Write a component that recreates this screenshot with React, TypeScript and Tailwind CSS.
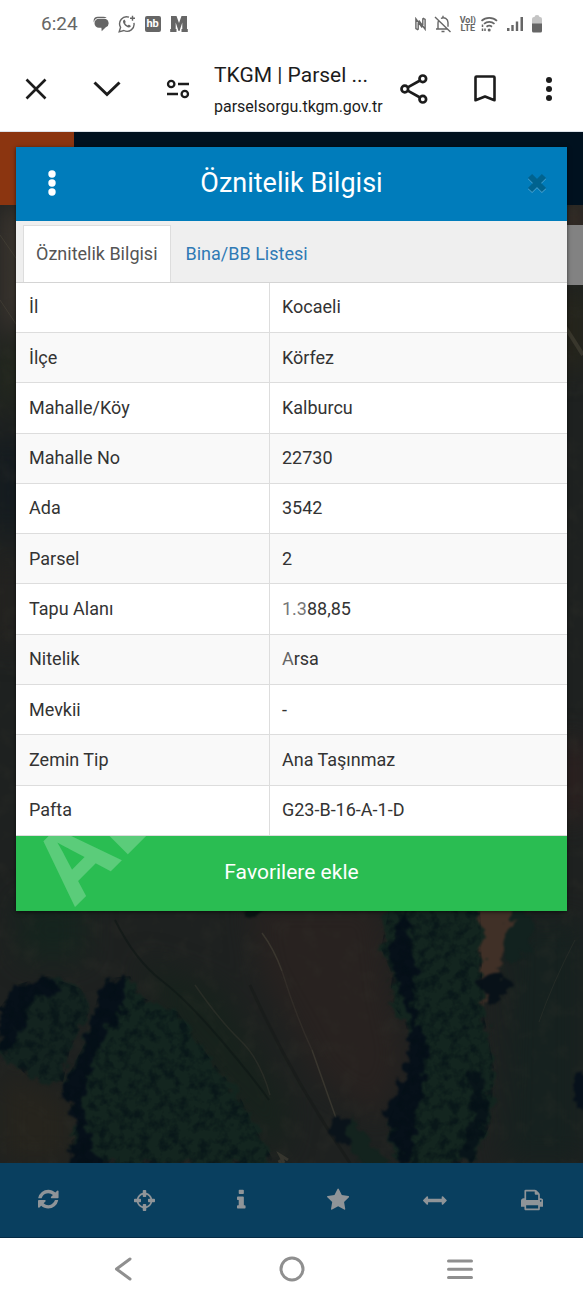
import { type ReactNode, useState } from 'react'

type Row = { label: string; value: ReactNode }

const ROWS: Row[] = [
  { label: 'İl', value: 'Kocaeli' },
  { label: 'İlçe', value: 'Körfez' },
  { label: 'Mahalle/Köy', value: 'Kalburcu' },
  { label: 'Mahalle No', value: '22730' },
  { label: 'Ada', value: '3542' },
  { label: 'Parsel', value: '2' },
  {
    label: 'Tapu Alanı',
    value: (
      <>
        <span className="text-[#777]">1.3</span>88,85
      </>
    ),
  },
  {
    label: 'Nitelik',
    value: (
      <>
        <span className="text-[#666]">A</span>rsa
      </>
    ),
  },
  { label: 'Mevkii', value: '-' },
  { label: 'Zemin Tip', value: 'Ana Taşınmaz' },
  { label: 'Pafta', value: 'G23-B-16-A-1-D' },
]

const TABS = ['Öznitelik Bilgisi', 'Bina/BB Listesi']

const TOOLS = [
  {
    label: 'Yenile',
    width: 1536,
    height: 1792,
    className: 'h-6',
    d: 'M1511 928q0 5-1 7-64 268-268 434.5t-478 166.5q-146 0-282.5-55t-243.5-157l-129 129q-19 19-45 19t-45-19-19-45v-448q0-26 19-45t45-19h448q26 0 45 19t19 45-19 45l-137 137q71 66 161 102t187 36q134 0 250-65t186-179q11-17 53-117 8-23 30-23h192q13 0 22.5 9.5t9.5 22.500zM1536 256v448q0 26-19 45t-45 19h-448q-26 0-45-19t-19-45 19-45l138-138q-148-137-349-137-134 0-250 65t-186 179q-11 17-53 117-8 23-30 23h-199q-13 0-22.5-9.5t-9.5-22.5v-7q65-268 270-434.5t480-166.5q146 0 284 55.5t245 156.5l130-129q19-19 45-19t45 19 19 45z',
  },
  {
    label: 'Konum',
    width: 1536,
    height: 1536,
    className: 'h-[21px]',
    d: 'M1197 896h-109q-26 0-45-19t-19-45v-128q0-26 19-45t45-19h109q-32-108-112.5-188.5t-188.5-112.5v109q0 26-19 45t-45 19h-128q-26 0-45-19t-19-45v-109q-108 32-188.5 112.5t-112.5 188.5h109q26 0 45 19t19 45v128q0 26-19 45t-45 19h-109q32 108 112.5 188.5t188.5 112.5v-109q0-26 19-45t45-19h128q26 0 45 19t19 45v109q108-32 188.5-112.5t112.5-188.5zM1536 704v128q0 26-19 45t-45 19h-143q-37 161-154.5 278.5t-278.5 154.5v143q0 26-19 45t-45 19h-128q-26 0-45-19t-19-45v-143q-161-37-278.5-154.5t-154.5-278.5h-143q-26 0-45-19t-19-45v-128q0-26 19-45t45-19h143q37-161 154.5-278.5t278.5-154.5v-143q0-26 19-45t45-19h128q26 0 45 19t19 45v143q161 37 278.5 154.5t154.5 278.5h143q26 0 45 19t19 45z',
  },
  {
    label: 'Bilgi',
    width: 640,
    height: 1792,
    className: 'h-6',
    d: 'M640 1344v128q0 26-19 45t-45 19h-512q-26 0-45-19t-19-45v-128q0-26 19-45t45-19h64v-384h-64q-26 0-45-19t-19-45v-128q0-26 19-45t45-19h384q26 0 45 19t19 45v576h64q26 0 45 19t19 45zM512 192v192q0 26-19 45t-45 19h-256q-26 0-45-19t-19-45v-192q0-26 19-45t45-19h256q26 0 45 19t19 45z',
  },
  {
    label: 'Favoriler',
    width: 1664,
    height: 1792,
    className: 'h-6',
    d: 'M1664 647q0 22-26 48l-363 354 86 500q1 7 1 20 0 21-10.5 35.500t-30.5 14.500q-19 0-40-12l-449-236-449 236q-22 12-40 12-21 0-31.500-14.500t-10.500-35.500q0-6 2-20l86-500-364-354q-25-27-25-48 0-37 56-46l502-73 225-455q19-41 49-41t49 41l225 455 502 73q56 9 56 46z',
  },
  {
    label: 'Ölçüm',
    width: 1792,
    height: 1280,
    className: 'h-[17px]',
    d: 'M1792 640q0 26-19 45l-256 256q-19 19-45 19t-45-19-19-45v-128h-1024v128q0 26-19 45t-45 19-45-19l-256-256q-19-19-19-45t19-45l256-256q19-19 45-19t45 19 19 45v128h1024v-128q0-26 19-45t45-19 45 19l256 256q19 19 19 45z',
  },
  {
    label: 'Yazdır',
    width: 1664,
    height: 1792,
    className: 'h-6',
    d: 'M384 1536h896v-256h-896v256zM384 896h896v-384h-160q-40 0-68-28t-28-68v-160h-640v640zM1536 960q0-26-19-45t-45-19-45 19-19 45 19 45 45 19 45-19 19-45zM1664 960v416q0 13-9.5 22.5t-22.5 9.5h-224v160q0 40-28 68t-68 28h-960q-40 0-68-28t-28-68v-160h-224q-13 0-22.5-9.5t-9.5-22.5v-416q0-79 56.5-135.5t135.5-56.5h64v-544q0-40 28-68t68-28h672q40 0 88 20t76 48l152 152q28 28 48 76t20 88v256h64q79 0 135.5 56.5t56.5 135.500z',
  },
]

export default function App() {
  return (
    <div className="flex min-h-screen flex-col bg-white font-['Roboto',sans-serif] text-[#222]">
      <StatusBar />
      <BrowserBar />
      <main className="grid flex-1 grid-cols-1">
        <Backdrop />
        <div className="z-10 col-start-1 row-start-1 px-4 pt-[15px] pb-24">
          <AttributeDialog />
        </div>
      </main>
      <SystemNav />
    </div>
  )
}

function StatusBar() {
  return (
    <header className="flex h-12 items-center justify-between pr-[41px] pl-[41px] text-[#666]">
      <div className="flex items-center gap-[9px]">
        <span className="mr-1.5 text-[19px]">6:24</span>
        <svg width="16" height="16" viewBox="0 0 16 16" fill="currentColor" aria-hidden>
          <path d="M4.800.800h5.500a4.600 4.600 0 0 1 3.400 1.300H6A5 5 0 0 0 1 6.600 3.600 3.600 0 0 1 .600 4.800a4.200 4.200 0 0 1 4.200-4z" />
          <path d="M6 2.800h5.200a4.400 4.400 0 0 1 1.600 8.500L8.700 15.200l-.300-3.400H6a4.500 4.500 0 0 1 0-9z" />
        </svg>
        <svg width="18" height="18" viewBox="0 0 18 18" fill="none" stroke="currentColor" strokeWidth="1.400" aria-hidden>
          <path d="M11 2.200A7 7 0 0 0 2.600 12.300L1.200 16.800l4.600-1.300A7 7 0 0 0 15.900 7.800" />
          <path d="M14.500.800v5M12 3.300h5" />
          <path
            d="M6.100 4.800c-1.600.800-1.400 2.900.100 4.800 1.800 2.300 4.700 4 6.300 2.200.400-.600.300-1-.200-1.300l-1.200-.700c-.700-.200-.800.800-1.500.700-1-.400-2.200-1.500-2.500-2.400 0-.600.700-.700.500-1.400l-.600-1.400c-.200-.500-.500-.600-.900-.500z"
            fill="currentColor"
            stroke="none"
          />
        </svg>
        <span className="flex size-4 items-center justify-center rounded-xs bg-[#666] text-[11px] leading-4 font-bold text-white">
          hb
        </span>
        <svg width="18" height="16" viewBox="0 0 18 16" fill="currentColor" aria-hidden>
          <path d="M1 0h5.500L9 7l2.500-7H17v13h.800v3H11.500v-3h.800V6.500L9.500 15h-1L5.700 6.500V13h.800v3H.200v-3H1z" />
        </svg>
      </div>
      <div className="flex items-center gap-1">
        <svg width="11" height="14" viewBox="0 0 11 14" fill="none" stroke="currentColor" strokeWidth="1.400" aria-hidden>
          <path d="M3.200 12.800.900 11.600V1.800L7.200 10.500M7.800 1.200l2.300 1.200v9.800L3.800 3.500M3.200 12.800V6M7.800 1.200V8" />
        </svg>
        <svg className="mx-1" width="18" height="18" viewBox="0 0 18 18" fill="none" stroke="currentColor" strokeWidth="1.400" aria-hidden>
          <path d="M1 2l15.500 15M2 14h11.500M4 14V8c0-1 .300-1.900.800-2.600M7 3.500a4.600 4.600 0 0 1 7 4v4.200M9 3V.800M7.500 16.500h3" />
        </svg>
        <span className="flex flex-col items-center text-[9px] leading-[8px] font-bold">
          <span>Vol)</span>
          <span>LTE</span>
        </span>
        <svg width="18" height="16" viewBox="0 0 18 16" fill="none" stroke="currentColor" strokeWidth="1.700" aria-hidden>
          <path d="M1.500 4.800a11.500 11.500 0 0 1 15.500 0M4 7.800a8 8 0 0 1 10.500 0M6.500 10.700a4.600 4.600 0 0 1 5.500 0" />
          <circle cx="9.200" cy="14" r="1.500" fill="currentColor" stroke="none" />
          <path d="M2.500 8.500v2.500M2.500 12.500v2.500M5 12.500V15" strokeWidth="1.500" />
        </svg>
        <svg className="mx-1" width="18" height="16" viewBox="0 0 18 16" fill="currentColor" aria-hidden>
          <path d="M1 12h2.500v3H1zM5.300 9h2.400v6H5.300zM9.800 5.500h2.400V15H9.800zM14.500 1H17v14h-2.500z" />
        </svg>
        <svg width="10" height="18" viewBox="0 0 10 18" aria-hidden>
          <path d="M0 9V4q0-2 2-2h.500q0-2 2.500-2t2.500 2H8q2 0 2 2v5z" fill="#c4c4c4" />
          <path d="M0 8.500h10V16q0 1.500-1.500 1.500h-7Q0 17.500 0 16z" fill="#666" />
        </svg>
      </div>
    </header>
  )
}

function BrowserBar() {
  return (
    <div className="flex h-[84px] items-center border-b border-[#dde3ea] pr-1.5 pb-0.5 text-[#1c1c1c]">
      <IconButton label="Kapat">
        <svg width="22" height="22" viewBox="0 0 22 22" fill="none" stroke="currentColor" strokeWidth="2.600">
          <path d="M1.500 1.500l19 19M20.500 1.500l-19 19" />
        </svg>
      </IconButton>
      <IconButton label="Küçült">
        <svg width="28" height="16" viewBox="0 0 28 16" fill="none" stroke="currentColor" strokeWidth="3">
          <path d="M1.500 1.500L14 13.500l12.500-12" />
        </svg>
      </IconButton>
      <IconButton label="Site bilgileri">
        <svg width="24" height="20" viewBox="0 0 24 20" fill="none" stroke="currentColor" strokeWidth="2.300">
          <circle cx="5.200" cy="5" r="3.200" />
          <circle cx="18.800" cy="15" r="3.200" />
          <path d="M12 5h11M1 15h11" />
        </svg>
      </IconButton>
      <div className="min-w-0 flex-1 pt-1 pl-px whitespace-nowrap">
        <div className="text-[21px] leading-8">TKGM | Parsel ...</div>
        <div className="text-base leading-8">parselsorgu.tkgm.gov.tr</div>
      </div>
      <IconButton label="Paylaş">
        <svg width="28" height="30" viewBox="0 0 28 30" fill="none" stroke="currentColor" strokeWidth="2.700">
          <circle cx="4.800" cy="15" r="3.300" />
          <circle cx="22.800" cy="4.800" r="3.300" />
          <circle cx="22.800" cy="25.200" r="3.300" />
          <path d="M7.700 13.400L20 6.500M7.700 16.600L20 23.500" />
        </svg>
      </IconButton>
      <IconButton label="Yer işareti">
        <svg width="22" height="27" viewBox="0 0 22 27" fill="none" stroke="currentColor" strokeWidth="2.600" strokeLinejoin="round">
          <path d="M1.500 2.500q0-1 1-1h17q1 0 1 1v22.700L11 21.500 1.500 25.200z" />
        </svg>
      </IconButton>
      <button type="button" aria-label="Menü" className="flex h-12 w-[57px] shrink-0 items-center justify-center">
        <svg width="6" height="24" viewBox="0 0 6 24" fill="currentColor">
          <circle cx="3" cy="3" r="3" />
          <circle cx="3" cy="12" r="3" />
          <circle cx="3" cy="21" r="3" />
        </svg>
      </button>
    </div>
  )
}

function IconButton({ label, children }: { label: string; children: ReactNode }) {
  return (
    <button type="button" aria-label={label} className="flex h-12 w-[71px] shrink-0 items-center justify-center">
      {children}
    </button>
  )
}

// Dimmed page under the dialog: site banner, aerial map, toolbar
function Backdrop() {
  return (
    <div className="col-start-1 row-start-1 flex flex-col bg-[#1d2120]">
      <div className="flex h-[73px] bg-[#00111f]">
        <div className="w-[74px] bg-[#8b3510]" />
      </div>
      <div className="relative flex-1">
        <AerialMap />
        <div className="absolute top-5 right-0 h-[60px] w-4 bg-[#828282]" />
      </div>
      <nav className="grid h-[75px] grid-cols-6 border-b border-[#052c46] bg-[#093f5f] pr-[3px] text-[#8f9498]">
        {TOOLS.map((tool) => (
          <button key={tool.label} type="button" aria-label={tool.label} className="flex items-center justify-center">
            <svg className={tool.className} viewBox={`0 0 ${tool.width} ${tool.height}`} fill="currentColor">
              <path d={tool.d} />
            </svg>
          </button>
        ))}
      </nav>
    </div>
  )
}

function AerialMap() {
  return (
    <svg
      className="absolute inset-0 size-full"
      viewBox="0 205 583 958"
      preserveAspectRatio="xMidYMid slice"
      colorInterpolationFilters="sRGB"
      aria-hidden
    >
      <defs>
        <filter id="rough" x="-10%" y="-10%" width="120%" height="120%">
          <feTurbulence type="fractalNoise" baseFrequency="0.09" numOctaves="3" seed="4" result="n" />
          <feDisplacementMap in="SourceGraphic" in2="n" scale="20" xChannelSelector="R" yChannelSelector="G" />
          <feGaussianBlur stdDeviation="1.2" />
        </filter>
        <filter id="soft" x="-20%" y="-20%" width="140%" height="140%">
          <feGaussianBlur stdDeviation="14" />
        </filter>
        <filter id="leaves" x="0" y="0" width="100%" height="100%">
          <feTurbulence type="fractalNoise" baseFrequency="0.1" numOctaves="3" seed="9" />
          <feColorMatrix values="0 0 0 0 0.015  0 0 0 0 0.06  0 0 0 0 0.085  3 0 0 0 -1.3" />
        </filter>
        <filter id="grain" x="0" y="0" width="100%" height="100%">
          <feTurbulence type="fractalNoise" baseFrequency="0.05" numOctaves="4" seed="3" />
          <feColorMatrix values="0 0 0 0 0.2  0 0 0 0 0.2  0 0 0 0 0.17  2 0 0 0 -0.95" />
        </filter>
        <clipPath id="woods">
          <path d="M0 1008l15-23 33-9 34 13 8 22-20 38-7 33-33-4-30-26z" />
          <path d="M97 1000l11-22 22-2 11 21 37 15 30 44 30 37 18 37 19 33H74l-3-25 9-15-19-33 25-49z" />
          <path d="M390 905l-9 43 11 26-2 26 15 23 8 26-8 37-18 37 7 30 7 10h71l19-40 3-56-11-56-3-106z" />
        </clipPath>
      </defs>
      <rect y="205" width="583" height="958" fill="#1e2120" />
      <g filter="url(#soft)">
        <path d="M0 205h30v110L0 345z" fill="#403831" />
        <path d="M0 345h30v60H0z" fill="#24291d" />
        <path d="M0 440h16v90H0z" fill="#09151f" />
        <path d="M0 560h18v90H0z" fill="#282320" />
        <path d="M560 205h23v30h-23z" fill="#4a362b" />
        <path d="M560 290h23v80h-23z" fill="#292719" />
        <path d="M560 740h23v80h-23z" fill="#31201f" />
        <path d="M16 900h70v60H20z" fill="#15241e" />
        <path d="M250 900h130l10 90 15 70-25 60-60-40-60-110z" fill="#282220" />
        <path d="M0 1070l70 30v63H0z" fill="#26241d" />
        <path d="M510 920h73v243h-80z" fill="#16211f" />
        <path d="M140 960l80 30 70 120-10 50-110-130z" fill="#17221c" />
      </g>
      <rect y="205" width="583" height="958" filter="url(#grain)" opacity="0.3" />
      <g stroke="#4b473b" strokeOpacity="0.55" fill="none">
        <path d="M0 235l18 26M0 300l20 30" />
        <path d="M564 325l19 30" strokeWidth="4" />
        <path d="M262 933q12 16 20 38M312 1050l24 68" strokeWidth="1.500" />
        <path d="M282 971q14 45 30 79M195 985q25 36 45 55t30 55" strokeOpacity="0.3" strokeWidth="1.500" />
        <path d="M115 920q20 40 46 60t60 60 48 60" stroke="#0c1614" strokeWidth="2" />
        <path d="M575 940q-22 42-36 82" strokeOpacity="0.25" />
        <path d="M279 1160l5 10M284 1163l-4-8 8 5" strokeWidth="3" />
        <path d="M250 985q40 90 100 178" stroke="#151918" strokeWidth="3" />
      </g>
      <g filter="url(#rough)">
        <path d="M476 905h42l-12 40-8 30-14 34z" fill="#403027" />
        <path d="M520 905l14 20-6 24-20 14-2-32z" fill="#12221f" />
        <path d="M0 1008l15-23 33-9 34 13 8 22-20 38-7 33-33-4-30-26z" fill="#13231f" />
        <path d="M0 1008l15-23 33-9 10 14-26 14-18 44-14 4z" fill="#061019" />
        <path
          d="M97 1000l11-22 22-2 11 21 37 15 30 44 30 37 18 37 19 33H74l-3-25 9-15-19-33 25-49z"
          fill="#13251f"
        />
        <path d="M97 1000l11-22 22-2-4 28-22 30-22 60 2 30 16 40v25H74l-3-40 9-22-19-33 25-49z" fill="#061019" />
        <path
          d="M390 905l-9 43 11 26-2 26 15 23 8 26-8 37-18 37 7 30 7 10h71l19-40 3-56-11-56-3-106z"
          fill="#13251f"
        />
        <path d="M404 905l8 40 6 22-6 40 14 30-4 60-12 66h-10l-14-50 18-40 8-50-16-40-6-30z" fill="#061019" />
        <path d="M466 1070l6 40-12 50 12 3 16-50-2-40z" fill="#081419" />
        <circle cx="494" cy="987" r="14" fill="#081118" />
        <circle cx="342" cy="1130" r="13" fill="#0a131a" />
        <path d="M350 1115l14 18 24 30h-28l-12-22z" fill="#13231e" />
        <ellipse cx="582" cy="1087" rx="11" ry="19" fill="#07111b" />
        <path d="M238 905l20 14 8-14z" fill="#0a1413" />
      </g>
      <rect y="890" width="583" height="273" filter="url(#leaves)" clipPath="url(#woods)" opacity="0.6" />
    </svg>
  )
}

function AttributeDialog() {
  const [tab, setTab] = useState(TABS[0])

  return (
    <section role="dialog" aria-label="Öznitelik Bilgisi" className="bg-white shadow-[0_1px_4px_rgba(0,0,0,0.6)]">
      <div className="flex h-[74px] items-center bg-[#007cbb] pb-0.5 text-white">
        <button type="button" aria-label="Seçenekler" className="flex h-full w-[72px] items-center justify-center">
          <svg width="8" height="26" viewBox="0 0 8 26" fill="currentColor">
            <circle cx="4" cy="4" r="3.700" />
            <circle cx="4" cy="13" r="3.700" />
            <circle cx="4" cy="22" r="3.700" />
          </svg>
        </button>
        <h1 className="flex-1 text-center text-[27px] leading-8">Öznitelik Bilgisi</h1>
        <button type="button" aria-label="Kapat" className="flex h-full w-[72px] items-center justify-center pl-3">
          <svg width="20" height="22" viewBox="0 0 20 22" fill="none" strokeWidth="6">
            <path d="M3 5l14 14M17 5L3 19" stroke="#4ba3d0" />
            <path d="M3 4l14 14M17 4L3 18" stroke="#00638f" />
          </svg>
        </button>
      </div>

      <div role="tablist" className="flex h-[62px] items-end border-b border-[#d4d4d4] bg-[#efefef] pl-[7px]">
        {TABS.map((t) => (
          <button
            key={t}
            type="button"
            role="tab"
            aria-selected={t === tab}
            onClick={() => setTab(t)}
            className={
              t === tab
                ? 'h-[57px] border border-b-0 border-[#ddd] bg-white px-3 text-lg whitespace-nowrap text-[#555]'
                : 'h-[57px] px-[15px] text-lg whitespace-nowrap text-[#2f7ab5]'
            }
          >
            {t}
          </button>
        ))}
      </div>

      <table className="h-[553px] w-full table-fixed border-collapse text-left text-lg text-[#333]">
        <tbody>
          {ROWS.map((row) => (
            <tr key={row.label} className="border-b border-[#ddd] even:bg-[#f9f9f9]">
              <th scope="row" className="w-[46%] border-r border-[#ddd] px-[13px] font-normal">
                {row.label}
              </th>
              <td className="px-3">{row.value}</td>
            </tr>
          ))}
        </tbody>
      </table>

      <button
        type="button"
        className="relative block h-[75px] w-full overflow-hidden bg-[#2abd52] pb-0.5 text-[21px] text-white"
      >
        <svg className="absolute top-0 left-0 h-full w-36" viewBox="0 0 144 75" aria-hidden>
          <text
            transform="rotate(-45 59 71)"
            x="59"
            y="71"
            fill="#fff"
            fillOpacity="0.23"
            className="font-['Open_Sans',sans-serif] text-[96px] font-bold"
          >
            AL
          </text>
        </svg>
        Favorilere ekle
      </button>
    </section>
  )
}

function SystemNav() {
  return (
    <footer className="flex h-[62px] items-center justify-center gap-[142px] bg-white text-[#8f8f8f]">
      <button type="button" aria-label="Geri">
        <svg width="26" height="26" viewBox="0 0 26 26" fill="none" stroke="currentColor" strokeWidth="3" strokeLinecap="round" strokeLinejoin="round">
          <path d="M19 3L5.500 13 19 23" />
        </svg>
      </button>
      <button type="button" aria-label="Ana ekran">
        <svg width="26" height="26" viewBox="0 0 26 26" fill="none" stroke="currentColor" strokeWidth="3">
          <circle cx="13" cy="13" r="11" />
        </svg>
      </button>
      <button type="button" aria-label="Son uygulamalar">
        <svg width="26" height="26" viewBox="0 0 26 26" fill="none" stroke="currentColor" strokeWidth="3" strokeLinecap="round">
          <path d="M1.500 5h23M1.500 13.300h23M1.500 21.600h23" />
        </svg>
      </button>
    </footer>
  )
}
